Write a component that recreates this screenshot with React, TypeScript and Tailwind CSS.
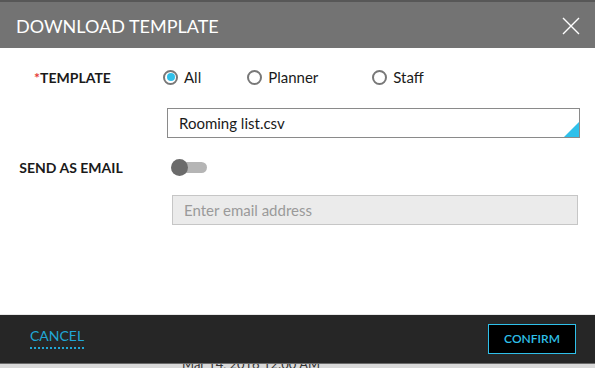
import React from "react";

function Radio({ label, checked, className }: { label: string; checked?: boolean; className?: string }) {
  return (
    <div className={`flex items-center ${className ?? ""}`}>
      <div className="w-[15px] h-[15px] rounded-full border-2 border-[#787878] flex items-center justify-center bg-white">
        {checked && <div className="w-[8px] h-[8px] rounded-full bg-[#2fc0ea]" />}
      </div>
      <span className="ml-[6px] text-[15px] text-[#1a1a1a]">{label}</span>
    </div>
  );
}

export default function App() {
  return (
    <div className="w-[595px] h-[368px] overflow-hidden flex flex-col font-['Lato',sans-serif] bg-white">
      {/* Header */}
      <div className="h-[48px] shrink-0 bg-[#737373] border-t-2 border-[#575757] flex items-center justify-between pl-[16px] pr-[15px]">
        <span className="text-white text-[18px] leading-none mt-[1px]">DOWNLOAD TEMPLATE</span>
        <svg width="18" height="18" viewBox="0 0 18 18" className="mt-[1px]">
          <path d="M1 1 L17 17 M17 1 L1 17" stroke="#ffffff" strokeWidth="1.4" />
        </svg>
      </div>

      {/* Body */}
      <div className="flex-1 flex flex-col pt-[21px]">
        <div className="flex items-center h-[16px]">
          <div className="w-[145px] text-center text-[14px] font-bold text-[#1a1a1a]">
            <span className="text-[#e53935]">*</span>TEMPLATE
          </div>
          <Radio label="All" checked className="ml-[18px]" />
          <Radio label="Planner" className="ml-[46px]" />
          <Radio label="Staff" className="ml-[54px]" />
        </div>

        <div className="ml-[167px] mr-[15px] mt-[23px] h-[30px] border border-[#8a8a8a] relative flex items-center pl-[11px]">
          <span className="text-[15px] text-[#1a1a1a]">Rooming list.csv</span>
          <svg width="15" height="15" viewBox="0 0 15 15" className="absolute right-0 bottom-0">
            <polygon points="15,0 15,15 0,15" fill="#2fc0ea" />
          </svg>
        </div>

        <div className="flex items-center mt-[21px] h-[17px]">
          <div className="w-[142px] text-center text-[14px] font-bold text-[#1a1a1a]">SEND AS EMAIL</div>
          <div className="ml-[29px] relative w-[36px] h-[17px]">
            <div className="absolute left-[4px] top-[3px] w-[32px] h-[11px] rounded-full bg-[#b5b5b5]" />
            <div className="absolute left-0 top-0 w-[17px] h-[17px] rounded-full bg-[#6b6b6b]" />
          </div>
        </div>

        <div className="ml-[172px] mr-[17px] mt-[19px] h-[30px] border border-[#c6c6c6] bg-[#ebebeb] flex items-center pl-[11px]">
          <span className="text-[15px] text-[#9a9a9a]">Enter email address</span>
        </div>
      </div>

      {/* Footer */}
      <div className="h-[49px] shrink-0 bg-[#262626] border-t border-[#e8e8e8] flex items-center justify-between pl-[30px] pr-[19px]">
        <span className="text-[14px] text-[#21a6d6] leading-none pb-[4px] border-b-2 border-dotted border-[#21a6d6]">CANCEL</span>
        <div className="w-[88px] h-[30px] border border-[#2fc0ea] bg-black flex items-center justify-center">
          <span className="text-[12px] font-semibold text-[#2fc0ea]">CONFIRM</span>
        </div>
      </div>
      <div className="h-[5px] shrink-0 bg-[#d9d9d9] border-t border-[#6a6a6a] overflow-hidden relative">
        <span className="absolute left-[182px] top-[-6px] text-[13px] text-[#333] leading-none">Mar 14, 2016 12:00 AM</span>
      </div>
    </div>
  );
}
